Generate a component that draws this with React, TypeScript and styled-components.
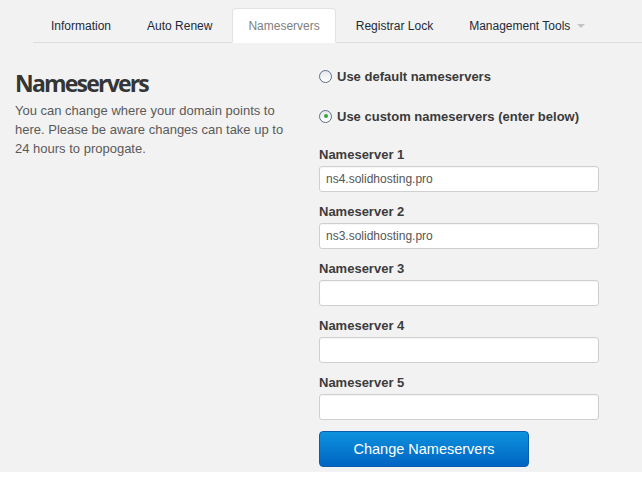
import React from "react";
import styled, { createGlobalStyle } from "styled-components";

const GlobalStyle = createGlobalStyle`
  html, body {
    margin: 0;
    padding: 0;
    background: #ffffff;
  }
  body {
    font-family: "Liberation Sans", Arial, sans-serif;
  }
`;

// Page shell
const Page = styled.div`
  background: #f2f2f2;
  padding-bottom: 5px;
`;

// Tabs
const TabBar = styled.ul`
  display: flex;
  list-style: none;
  margin: 0 0 0 33px;
  padding: 8px 0 0 2px;
  border-bottom: 1px solid #dddddd;
`;

const Tab = styled.li<{ $active?: boolean }>`
  display: flex;
  align-items: center;
  height: 35px;
  padding: 0 15px;
  margin-right: 4px;
  margin-bottom: -1px;
  box-sizing: border-box;
  font-size: 12px;
  color: ${(p) => (p.$active ? "#808080" : "#1d2a38")};
  background: ${(p) => (p.$active ? "#ffffff" : "transparent")};
  border: 1px solid ${(p) => (p.$active ? "#e2e2e2" : "transparent")};
  border-bottom-color: transparent;
  border-radius: 4px 4px 0 0;
  cursor: pointer;
`;

const Caret = styled.span`
  display: inline-block;
  width: 0;
  height: 0;
  margin-left: 7px;
  margin-top: 1px;
  border-top: 4px solid #c4c4c4;
  border-left: 4px solid transparent;
  border-right: 4px solid transparent;
`;

// Content
const Content = styled.div`
  display: grid;
  grid-template-columns: 285px 280px;
  column-gap: 19px;
  padding: 0 15px;
  align-items: start;
`;

const Intro = styled.div`
  padding-top: 26px;
`;

const Heading = styled.h2`
  margin: 0;
  font-family: "Open Sans", "Noto Sans", sans-serif;
  font-weight: 700;
  font-size: 23px;
  line-height: 28px;
  letter-spacing: -1.8px;
  color: #353535;
`;

const Description = styled.p`
  margin: 4px 0 0;
  font-size: 13px;
  line-height: 19px;
  color: #5a5a5a;
`;

const Form = styled.form`
  padding-top: 23px;
`;

const RadioRow = styled.label`
  display: flex;
  align-items: center;
  height: 20px;
  margin-bottom: 20px;
  font-size: 13px;
  font-weight: 700;
  color: #3a3a3a;
  cursor: pointer;
`;

const RadioDot = styled.span<{ $checked?: boolean }>`
  position: relative;
  width: 11px;
  height: 11px;
  margin-right: 5px;
  border: 1px solid #5d6f89;
  border-radius: 50%;
  background: linear-gradient(#e4e8ee, #ffffff);
  flex-shrink: 0;

  &::after {
    content: "";
    display: ${(p) => (p.$checked ? "block" : "none")};
    position: absolute;
    left: 3.5px;
    top: 3.5px;
    width: 4px;
    height: 4px;
    border-radius: 50%;
    background: #3aa33e;
  }
`;

const Field = styled.div`
  margin-bottom: 11px;
`;

const FieldLabel = styled.label`
  display: block;
  height: 18px;
  line-height: 18px;
  margin-bottom: 2px;
  font-size: 13px;
  font-weight: 700;
  color: #3c3c3c;
`;

const TextInput = styled.input`
  display: block;
  box-sizing: border-box;
  width: 280px;
  height: 26px;
  padding: 0 6px;
  border: 1px solid #cfcfcf;
  border-radius: 3px;
  background: #ffffff;
  box-shadow: inset 0 1px 1px rgba(0, 0, 0, 0.04);
  font-family: "Liberation Sans", Arial, sans-serif;
  font-size: 12px;
  color: #555555;
  outline: none;
`;

const SubmitButton = styled.button`
  display: block;
  box-sizing: border-box;
  width: 210px;
  height: 36px;
  border: 1px solid #0a5cae;
  border-radius: 4px;
  background: linear-gradient(#0d92de, #0064c2);
  font-family: "Liberation Sans", Arial, sans-serif;
  font-size: 14.5px;
  color: #ffffff;
  cursor: pointer;
`;

const tabs = ["Information", "Auto Renew", "Nameservers", "Registrar Lock"];
const nameservers = ["ns4.solidhosting.pro", "ns3.solidhosting.pro", "", "", ""];

const App: React.FC = () => {
  return (
    <>
      <GlobalStyle />
      <Page>
        <TabBar>
          {tabs.map((t) => (
            <Tab key={t} $active={t === "Nameservers"}>
              {t}
            </Tab>
          ))}
          <Tab>
            Management Tools <Caret />
          </Tab>
        </TabBar>

        <Content>
          <Intro>
            <Heading>Nameservers</Heading>
            <Description>
              You can change where your domain points to here. Please be aware
              changes can take up to 24 hours to propogate.
            </Description>
          </Intro>

          <Form onSubmit={(e) => e.preventDefault()}>
            <RadioRow>
              <RadioDot />
              Use default nameservers
            </RadioRow>
            <RadioRow>
              <RadioDot $checked />
              Use custom nameservers (enter below)
            </RadioRow>

            {nameservers.map((ns, i) => (
              <Field key={i}>
                <FieldLabel>Nameserver {i + 1}</FieldLabel>
                <TextInput defaultValue={ns} />
              </Field>
            ))}

            <SubmitButton type="submit">Change Nameservers</SubmitButton>
          </Form>
        </Content>
      </Page>
    </>
  );
};

export default App;
